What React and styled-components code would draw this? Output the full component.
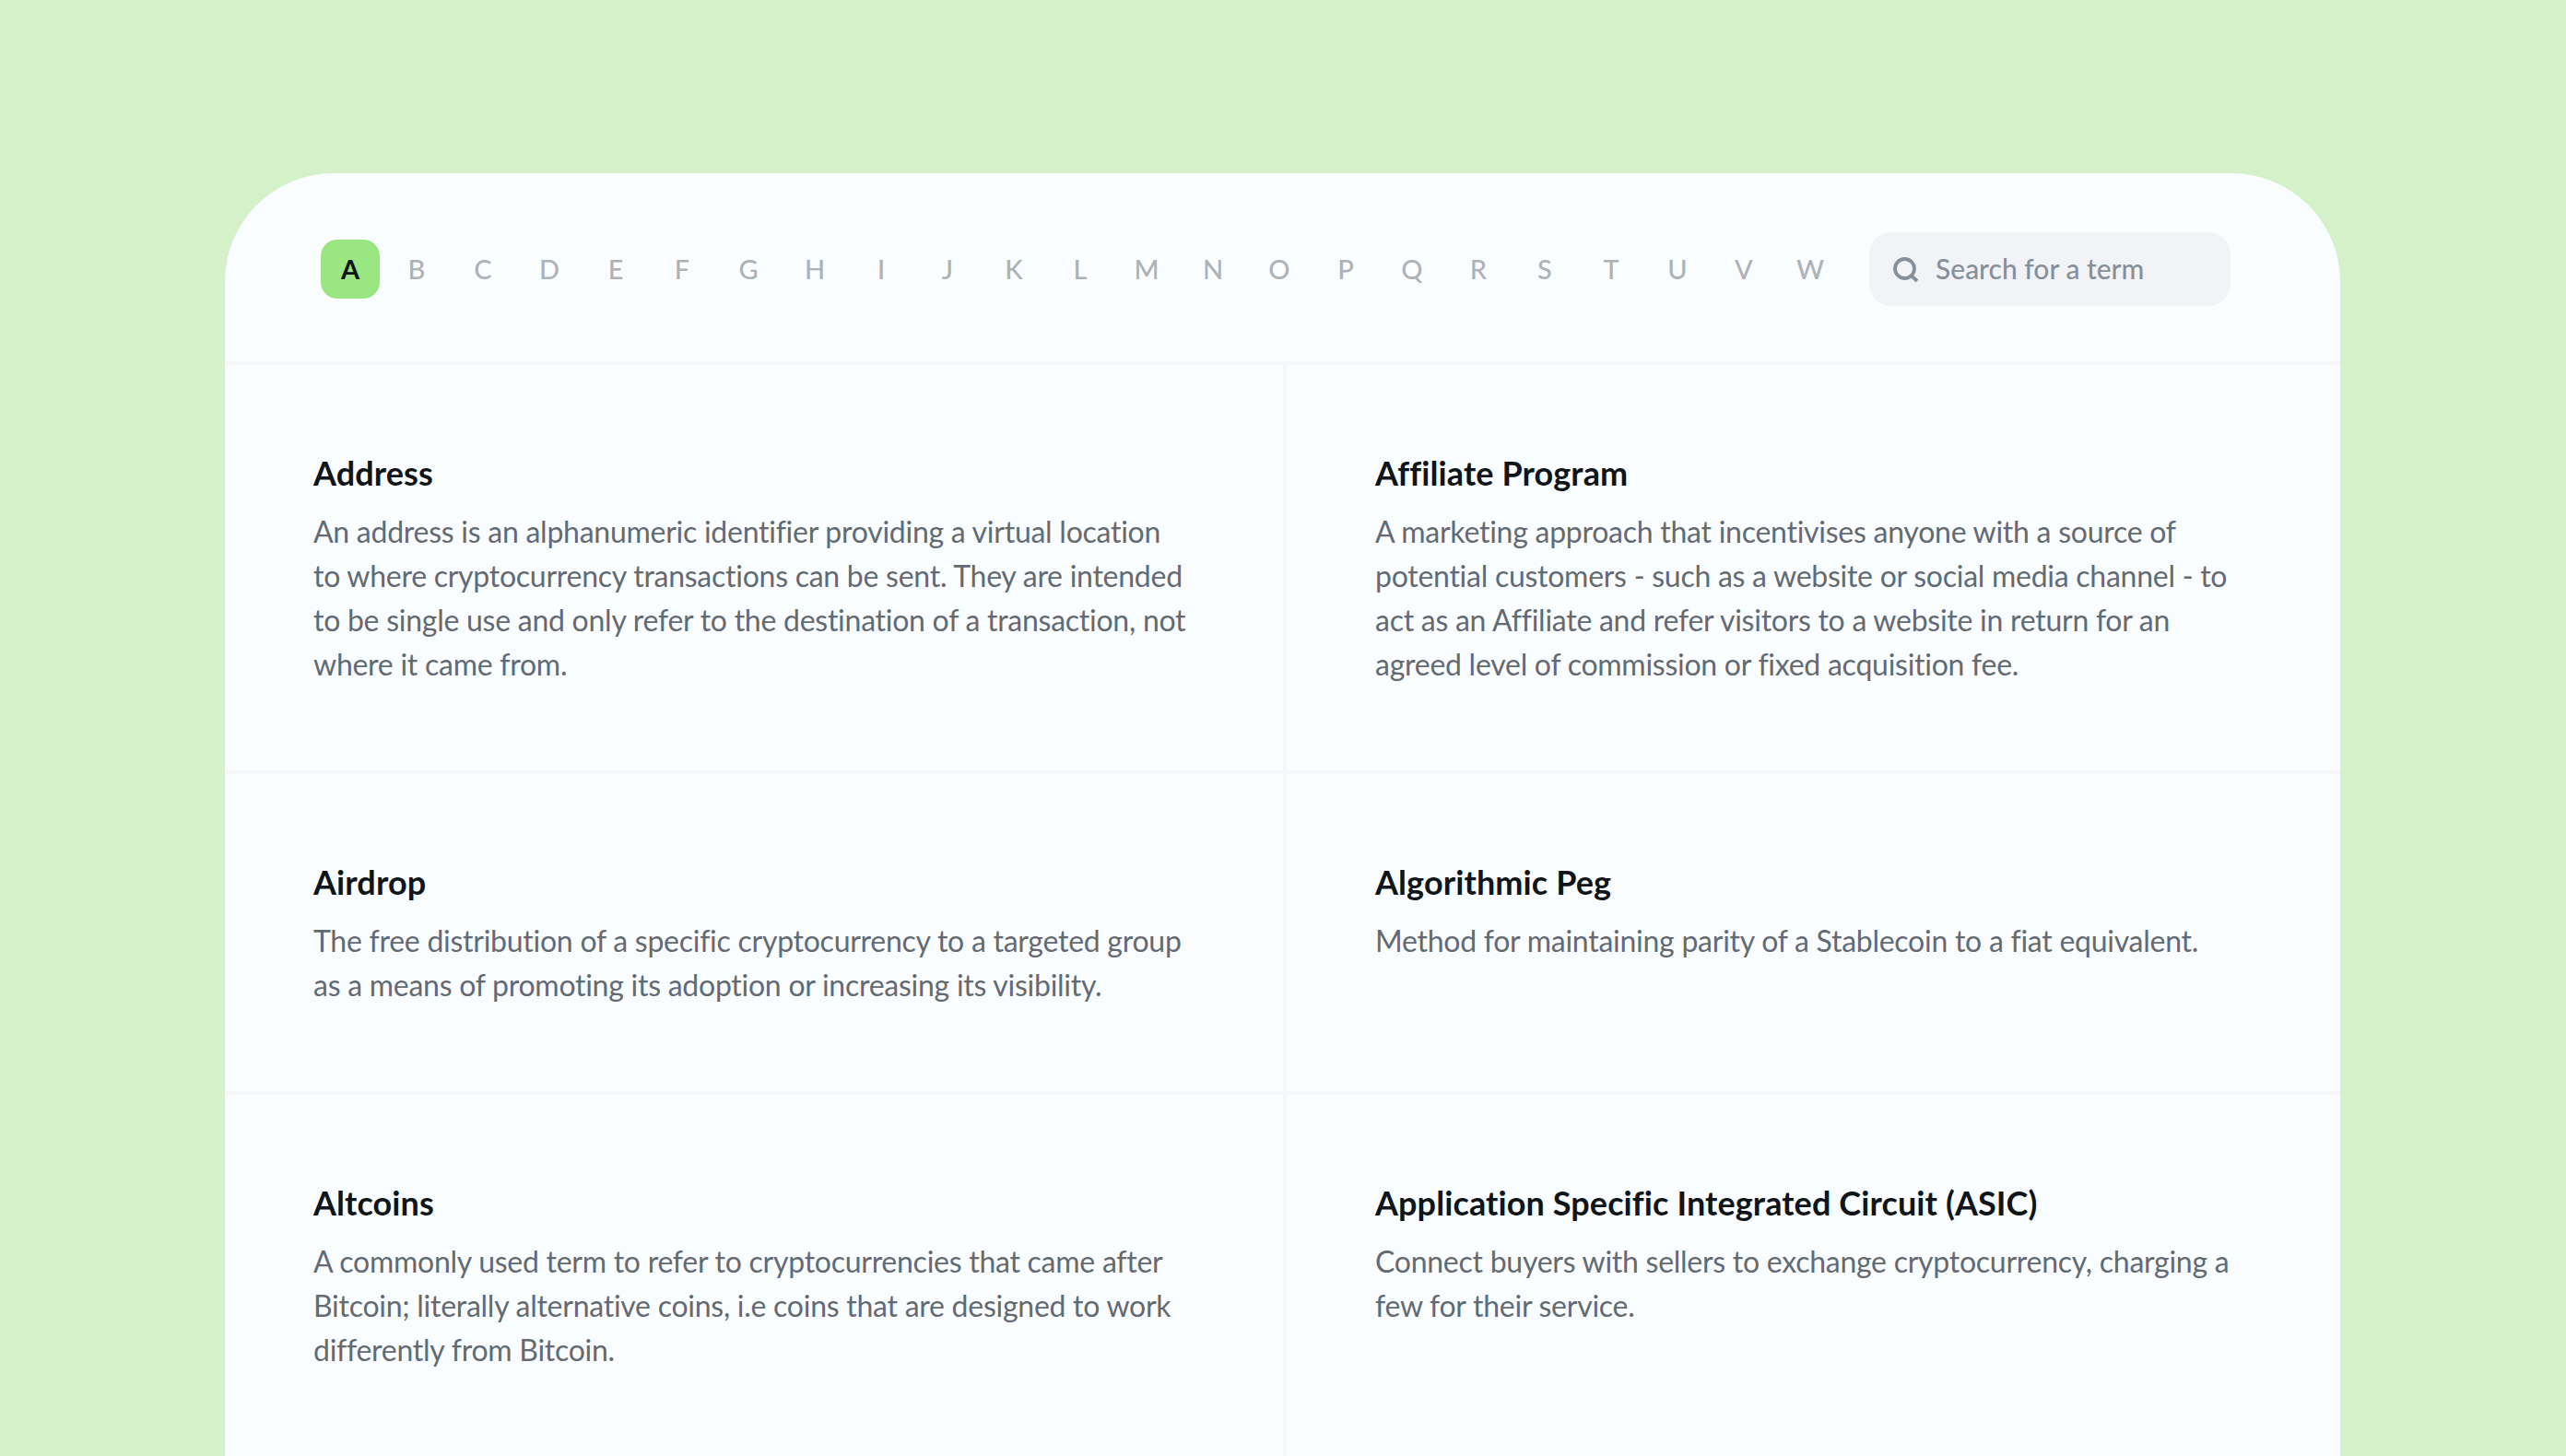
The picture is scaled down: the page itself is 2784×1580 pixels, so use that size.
import React from "react";
import styled, { createGlobalStyle } from "styled-components";

const letters = "BCDEFGHIJKLMNOPQRSTUVW".split("");

const terms = [
    {
        title: "Address",
        text: "An address is an alphanumeric identifier providing a virtual location to where cryptocurrency transactions can be sent. They are intended to be single use and only refer to the destination of a transaction, not where it came from.",
    },
    {
        title: "Affiliate Program",
        text: "A marketing approach that incentivises anyone with a source of potential customers - such as a website or social media channel - to act as an Affiliate and refer visitors to a website in return for an agreed level of commission or fixed acquisition fee.",
    },
    {
        title: "Airdrop",
        text: "The free distribution of a specific cryptocurrency to a targeted group as a means of promoting its adoption or increasing its visibility.",
    },
    {
        title: "Algorithmic Peg",
        text: "Method for maintaining parity of a Stablecoin to a fiat equivalent.",
    },
    {
        title: "Altcoins",
        text: "A commonly used term to refer to cryptocurrencies that came after Bitcoin; literally alternative coins, i.e coins that are designed to work differently from Bitcoin.",
    },
    {
        title: "Application Specific Integrated Circuit (ASIC)",
        text: "Connect buyers with sellers to exchange cryptocurrency, charging a few for their service.",
    },
];

function App() {
    return (
        <>
            <GlobalStyle />
            <Page>
                <Card>
                    <Header>
                        <Letters>
                            <ActiveLetter>A</ActiveLetter>
                            {letters.map((letter) => (
                                <Letter key={letter}>{letter}</Letter>
                            ))}
                        </Letters>
                        <Search>
                            <svg width="28" height="27" viewBox="0 0 28 27" fill="none" stroke="#87909a" strokeWidth="3.8">
                                <circle cx="12.5" cy="12.5" r="10.5" />
                                <path d="M19.5 20l6.5 6" />
                            </svg>
                            <SearchLabel>Search for a term</SearchLabel>
                        </Search>
                    </Header>
                    <Grid>
                        {terms.map((term) => (
                            <Term key={term.title}>
                                <Title>{term.title}</Title>
                                <Text>{term.text}</Text>
                            </Term>
                        ))}
                    </Grid>
                </Card>
            </Page>
        </>
    );
}

const GlobalStyle = createGlobalStyle`
    html, body {
        margin: 0;
        padding: 0;
        background: #d5f1ca;
    }
    body {
        font-family: Lato, "Liberation Sans", sans-serif;
    }
`;

const Page = styled.div`
    height: 1580px;
    overflow: hidden;
    padding: 188px 245px 0 244px;
    box-sizing: border-box;
`;

const Card = styled.div`
    background: #fafdff;
    border-radius: 118px 118px 0 0;
    height: 1392px;
    display: flex;
    flex-direction: column;
`;

const Header = styled.div`
    display: flex;
    align-items: center;
    height: 200px;
    padding: 4px 0 0 104px;
    border-bottom: 4px solid #f5f6f8;
`;

const Letters = styled.div`
    display: flex;
    gap: 8px;
    margin-right: 32px;
`;

const Letter = styled.div`
    width: 64px;
    height: 64px;
    box-sizing: border-box;
    padding-bottom: 2px;
    display: flex;
    align-items: center;
    justify-content: center;
    font-size: 29px;
    font-weight: 500;
    color: #adb1b8;
`;

const ActiveLetter = styled(Letter)`
    background: #9ae680;
    border-radius: 18px;
    color: #10151a;
    font-weight: 700;
`;

const Search = styled.div`
    width: 392px;
    height: 80px;
    box-sizing: border-box;
    padding-left: 26px;
    display: flex;
    align-items: center;
    gap: 18px;
    background: #f1f3f6;
    border-radius: 24px;
`;

const SearchLabel = styled.span`
    padding-bottom: 2px;
    font-size: 30px;
    font-weight: 500;
    color: #87909a;
`;

const Grid = styled.div`
    flex: 1;
    display: grid;
    grid-template-columns: 1152px 1fr;
    grid-template-rows: 444px 348px 1fr;
`;

const Term = styled.div`
    padding: 93px 96px 0;
    border-bottom: 4px solid #f5f6f8;
    box-sizing: border-box;
    &:nth-child(odd) {
        border-right: 4px solid #f5f6f8;
    }
    &:nth-last-child(-n + 2) {
        border-bottom: none;
    }
`;

const Title = styled.h3`
    margin: 0 0 16px;
    font-size: 36px;
    line-height: 48px;
    font-weight: 700;
    letter-spacing: 0.1px;
    color: #10151a;
`;

const Text = styled.p`
    margin: 0;
    font-size: 32px;
    line-height: 48px;
    letter-spacing: -0.26px;
    color: #636a73;
`;

export default App;
